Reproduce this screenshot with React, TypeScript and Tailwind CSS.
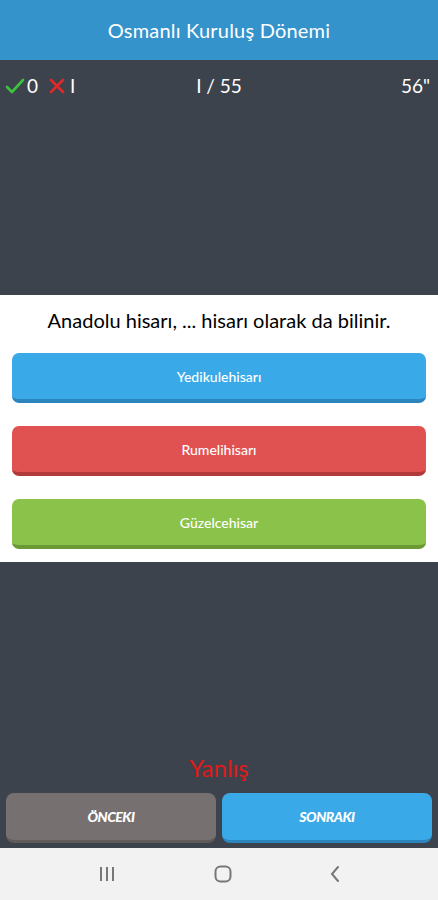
import React from 'react';

const answers = [
  { text: 'Yedikulehisarı', cls: 'bg-[#3aa9e8] border-[#2c86bd]' },
  { text: 'Rumelihisarı', cls: 'bg-[#e05252] border-[#b23a3a]' },
  { text: 'Güzelcehisar', cls: 'bg-[#8bc34a] border-[#6b9a35]' },
];

const App: React.FC = () => {
  return (
    <div className="w-[438px] h-[900px] flex flex-col bg-[#3d434c] font-['Lato','Open_Sans',sans-serif] overflow-hidden">
      {/* Başlık */}
      <div className="h-[60px] bg-[#3593cc] flex items-center justify-center">
        <h1 className="text-white text-[20px] tracking-[0.2px]">Osmanlı Kuruluş Dönemi</h1>
      </div>

      {/* Skor satırı */}
      <div className="h-[52px] flex items-center justify-between px-[5px] text-white text-[19px]">
        <div className="flex items-center w-[120px]">
          <svg width="20" height="16" viewBox="0 0 20 16">
            <path d="M2 9 L7 14 L18 2" fill="none" stroke="#3cc23c" strokeWidth="2.6" strokeLinecap="round" strokeLinejoin="round" />
          </svg>
          <span className="ml-[2px]">0</span>
          <svg width="18" height="16" viewBox="0 0 18 16" className="ml-[10px]">
            <path d="M3 2 L15 14 M15 2 L3 14" fill="none" stroke="#e02a2a" strokeWidth="2.6" strokeLinecap="round" />
          </svg>
          <span className="ml-[4px]">I</span>
        </div>
        <div>I / 55</div>
        <div className="w-[120px] text-right pr-[3px]">56"</div>
      </div>

      <div className="h-[183px]" />

      {/* Soru paneli */}
      <div className="bg-white h-[267px] px-[12px] pt-[12px] flex flex-col">
        <p className="text-black text-[20px] text-center leading-[26px]">Anadolu hisarı, ... hisarı olarak da bilinir.</p>
        <div className="flex flex-col gap-[23px] mt-[20px]">
          {answers.map((a) => (
            <button
              key={a.text}
              className={`h-[50px] rounded-[7px] border-b-[4px] text-white text-[14px] font-medium flex items-center justify-center ${a.cls}`}
            >
              {a.text}
            </button>
          ))}
        </div>
      </div>

      <div className="flex-1 flex flex-col justify-end">
        <div className="text-center text-[#e01818] text-[24px] leading-[30px] mb-[10px]">Yanlış</div>
        <div className="flex gap-[6px] px-[6px] pb-[5px]">
          <button className="flex-1 h-[50px] rounded-[8px] bg-[#767170] border-b-[3px] border-[#5f5b5a] text-white text-[14px] font-black italic tracking-[-0.5px]">
            ÖNCEKI
          </button>
          <button className="flex-1 h-[50px] rounded-[8px] bg-[#3aa9e8] border-b-[3px] border-[#2c86bd] text-white text-[14px] font-black italic tracking-[-0.5px]">
            SONRAKI
          </button>
        </div>
      </div>

      {/* Android gezinme çubuğu */}
      <div className="h-[52px] bg-[#f2f2f2] flex items-center justify-between pl-[97px] pr-[96px]">
        <svg width="20" height="18" viewBox="0 0 20 18">
          <path d="M4 2 V16 M10 2 V16 M16 2 V16" stroke="#777" strokeWidth="2" />
        </svg>
        <svg width="20" height="20" viewBox="0 0 20 20">
          <rect x="2.5" y="2.5" width="15" height="15" rx="5" fill="none" stroke="#777" strokeWidth="2" />
        </svg>
        <svg width="14" height="20" viewBox="0 0 14 20">
          <path d="M10 3 L4 10 L10 17" fill="none" stroke="#777" strokeWidth="2" strokeLinecap="round" />
        </svg>
      </div>
    </div>
  );
};

export default App;
